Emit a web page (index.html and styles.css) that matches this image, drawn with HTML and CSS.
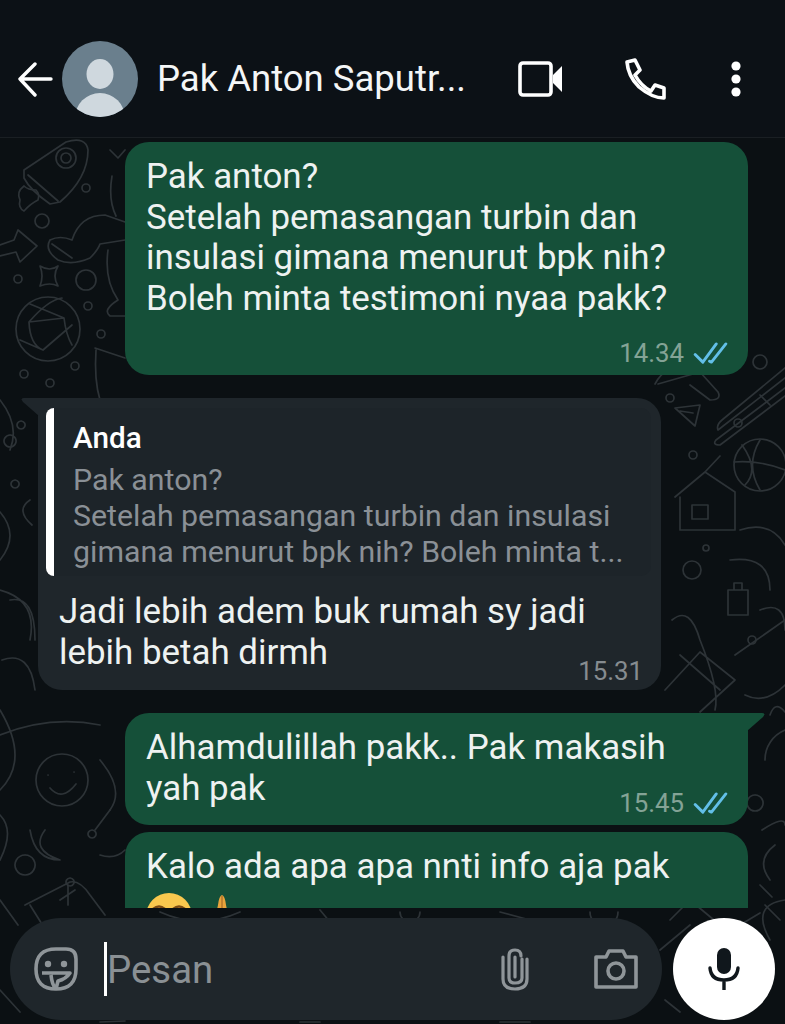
FILE: index.html
```html
<!DOCTYPE html>
<html lang="en">
<head>
    <meta charset="UTF-8">
    <meta name="viewport" content="width=device-width, initial-scale=1.0">
    <title>Pak Anton Saputra</title>
    <link rel="stylesheet" href="styles.css">
</head>
<body>
    <div id="phone">
        <!-- wallpaper doodles -->
        <svg class="wallpaper" viewBox="0 0 785 1024" fill="none" stroke="#2d3337" stroke-width="1.7" stroke-linejoin="round" stroke-linecap="round">
            <path d="M24 170 L66 142 Q86 136 88 150 Q88 178 60 202 L50 204 Q30 190 24 178 Z M28 175 L58 201"/>
            <circle cx="66" cy="158" r="10"/><circle cx="66" cy="158" r="5"/>
            <path d="M24 186 Q16 192 20 200 Q18 208 24 211 Q30 204 38 200 Q40 194 36 190 Q28 190 24 186Z"/>
            <circle cx="86" cy="188" r="4"/><circle cx="42" cy="221" r="7"/>
            <path d="M0 245 L14 240 L18 230 L37 246 L20 262 L16 252 L0 256"/>
            <path d="M50 240 Q60 235 72 240 Q80 215 105 215 L125 222 M50 240 Q44 250 58 260 Q72 266 90 258 Q98 250 100 244 L125 240 M52 244 L72 258"/>
            <path d="M40 266 Q50 272 58 266 Q52 276 58 286 Q50 282 40 286 Q44 276 40 266Z"/>
            <circle cx="18" cy="279" r="4"/><circle cx="86" cy="280" r="10"/><circle cx="88" cy="306" r="4"/><circle cx="101" cy="334" r="4"/>
            <circle cx="48" cy="329" r="32"/>
            <path d="M29 322 Q48 300 62 298 M29 322 Q30 345 43 350 M29 322 L64 318 M43 350 L72 325 M64 318 Q66 335 72 345 M20 340 L43 350 M30 304 L64 318"/>
            <circle cx="75" cy="366" r="4"/><circle cx="24" cy="374" r="4"/><circle cx="50" cy="383" r="4"/>
            <path d="M95 348 L125 358 M96 350 Q94 380 100 400"/>
            <path d="M110 150 L118 158 L125 150 M112 176 Q108 200 116 216 M108 250 Q104 280 118 300 Q102 310 110 316 L125 316"/>
            <path d="M0 400 Q20 425 10 450 M10 435 a6 6 0 1 0 .1 0 M21 421 a4 4 0 1 0 .1 0 M15 480 a4 4 0 1 0 .1 0 M30 500 Q15 510 32 525 M0 512 Q20 535 0 560 M0 590 Q38 600 30 640 M10 600 Q35 595 35 640 M2 660 Q30 650 35 690"/>
            <path d="M658 384 L700 372 L718 392 Q722 400 710 400 L690 385 M655 384 Q668 360 700 364"/>
            <path d="M675 408 L700 405 L695 426 Z M680 411 L693 413"/>
            <circle cx="670" cy="398" r="4"/><circle cx="760" cy="362" r="7"/><circle cx="738" cy="423" r="4"/><circle cx="693" cy="455" r="4"/>
            <path d="M722 420 L785 368 M716 440 L785 388 M722 420 Q716 425 718 430 L785 378 M716 440 Q712 445 720 445 L785 396 M760 395 L770 405"/>
            <circle cx="760" cy="465" r="26"/><path d="M734 462 Q760 460 785 470 M760 440 Q745 465 760 490 M742 445 Q760 470 745 485"/>
            <path d="M675 497 L705 472 L735 492 V530 H680 V497 M692 505 h16 v14 h-16z M705 472 L720 456"/>
            <circle cx="706" cy="548" r="3"/><circle cx="692" cy="570" r="9"/><path d="M728 590 h20 v25 h-20z M734 590 v-7 h8 v7"/><path d="M740 530 Q770 520 785 545 M730 560 Q770 555 770 590 M760 610 Q785 600 785 630"/>
            <path d="M672 620 Q690 605 700 640 Q720 690 715 710 M665 690 L700 652 L735 680 L700 712 M680 655 L720 690"/>
            <circle cx="752" cy="640" r="4"/><path d="M735 655 L785 620 M745 695 Q765 705 785 685"/>
            <path d="M770 715 Q775 700 785 712 M765 760 a32 32 0 0 1 20 -30 M755 795 a8 8 0 1 0 .1 0 M762 830 Q785 815 785 825 M770 880 Q755 860 775 845 M785 900 Q750 905 770 940 M760 885 l12 12"/>
            <path d="M0 710 Q30 760 0 790 M0 735 Q50 715 100 725"/>
            <circle cx="62" cy="780" r="26"/><path d="M48 775 h.1 M74 772 h.1 M50 788 Q62 802 76 784"/>
            <path d="M100 760 Q125 790 110 810 M92 830 a4 4 0 1 0 .1 0 M45 830 Q30 850 60 860 Q35 860 30 830 M25 855 a10 10 0 1 0 .1 0 M0 815 Q15 830 0 860 M70 878 a4 4 0 1 0 .1 0"/>
            <path d="M25 905 L70 882 Q80 880 90 895 L105 915 M30 905 L55 945 M60 900 L75 890 M68 885 L68 905"/>
            <path d="M95 830 L110 810 M100 855 Q115 860 125 850 M0 900 L18 925"/>
            <path d="M660 950 L690 925 M670 920 L690 900 L720 925 M740 925 l20 -12 M765 905 l15 15"/>
            <path d="M160 912 Q200 930 240 912 M320 910 l10 12 M400 912 a10 10 0 0 0 20 0 M500 912 l30 8 M590 912 a14 14 0 0 0 28 0"/>
            <path d="M0 990 L20 1012 M100 1022 L125 1021 M300 1022 l20 0 M500 1022 l30 0 M665 1000 l15 12"/>
        </svg>

        <div class="top-bar">
            <svg class="back-icon" viewBox="0 0 36 36" fill="none" stroke="#fff" stroke-width="3.4" stroke-linecap="round" stroke-linejoin="round">
                <path d="M34 18H3M18 3 3 18l15 16"/>
            </svg>
            <svg class="avatar" viewBox="0 0 76 76">
                <defs><clipPath id="avatar-clip"><circle cx="38" cy="38" r="38"/></clipPath></defs>
                <circle cx="38" cy="38" r="38" fill="#6a7f8d"/>
                <g clip-path="url(#avatar-clip)" fill="#cfd8de">
                    <ellipse cx="38" cy="33" rx="13.5" ry="15"/>
                    <ellipse cx="38" cy="77" rx="25" ry="25"/>
                </g>
            </svg>
            <div class="contact-name">Pak Anton Saputr...</div>
            <div class="top-actions">
                <svg class="top-icon" viewBox="0 0 46 36" fill="none">
                    <rect x="2" y="2" width="31" height="32" rx="3" stroke="#fff" stroke-width="3.6"/>
                    <path d="M35 14 44 5V31L35 22Z" fill="#fff"/>
                </svg>
                <svg class="top-icon" viewBox="0 0 42 42" fill="none" stroke="#fff" stroke-width="3.6" stroke-linejoin="round">
                    <path d="M3 4 11 2 16 12 11 17Q17 28 27 33L31 27 40 30V40Q28 40 15 29 4 18 3 4Z"/>
                </svg>
                <svg class="top-dots" viewBox="0 0 12 36" fill="#fff">
                    <circle cx="6" cy="5" r="4.6"/><circle cx="6" cy="18" r="4.6"/><circle cx="6" cy="31" r="4.6"/>
                </svg>
            </div>
        </div>

        <div class="messages">
            <div class="bubble out">
                <div class="text">Pak anton?<br>Setelah pemasangan turbin dan<br>insulasi gimana menurut bpk nih?<br>Boleh minta testimoni nyaa pakk?</div>
                <div class="meta">
                    <span class="time">14.34</span>
                    <svg class="ticks" viewBox="0 0 36 24" fill="none" stroke="#62bfe8" stroke-width="3" stroke-linecap="round" stroke-linejoin="round">
                        <path d="M2 13 10 21 24 2M17 20 19 21 34 2"/>
                    </svg>
                </div>
            </div>

            <div class="bubble in">
                <svg class="tail tail-left" viewBox="0 0 18 18"><path d="M18 0H3Q-1 0 2 4L18 18Z" fill="#1f262b"/></svg>
                <div class="quote">
                    <div class="quote-bar"></div>
                    <div class="quote-body">
                        <div class="quote-name">Anda</div>
                        <div class="quote-text">Pak anton?<br>Setelah pemasangan turbin dan insulasi<br>gimana menurut bpk nih? Boleh minta t...</div>
                    </div>
                </div>
                <div class="text reply-text">Jadi lebih adem buk rumah sy jadi<br>lebih betah dirmh</div>
                <div class="meta meta-in"><span class="time">15.31</span></div>
            </div>

            <div class="bubble out has-tail">
                <svg class="tail tail-right" viewBox="0 0 18 18"><path d="M0 0H15Q19 0 16 4L0 18Z" fill="#155039"/></svg>
                <div class="text">Alhamdulillah pakk.. Pak makasih<br>yah pak</div>
                <div class="meta meta-tight">
                    <span class="time">15.45</span>
                    <svg class="ticks" viewBox="0 0 36 24" fill="none" stroke="#62bfe8" stroke-width="3" stroke-linecap="round" stroke-linejoin="round">
                        <path d="M2 13 10 21 24 2M17 20 19 21 34 2"/>
                    </svg>
                </div>
            </div>

            <div class="bubble out last">
                <div class="text">Kalo ada apa apa nnti info aja pak</div>
                <div class="emoji-row">
                    <svg class="emoji" viewBox="0 0 46 46">
                        <circle cx="23" cy="23" r="23" fill="#f9c84e"/>
                        <path d="M7 16q6-5 12 0M27 16q6-5 12 0" fill="none" stroke="#7a4a12" stroke-width="2.4"/>
                    </svg>
                    <svg class="emoji-hands" viewBox="0 0 22 46">
                        <path d="M11 2Q14 3 15 12L21 40H1L7 12Q8 3 11 2Z" fill="#e9a33c"/>
                        <path d="M11 3V40" stroke="#b5762a" stroke-width="1.5"/>
                    </svg>
                </div>
            </div>
        </div>

        <div class="composer">
            <div class="input-pill">
                <svg class="sticker-icon" viewBox="0 0 44 44" fill="none" stroke="#8f9599" stroke-width="3.6" stroke-linejoin="round">
                    <path d="M22 2H32Q42 2 42 12V22Q42 42 22 42 2 42 2 22 2 2 22 2Z"/>
                    <circle cx="14" cy="17" r="3.2" fill="#8f9599" stroke="none"/>
                    <circle cx="30" cy="17" r="3.2" fill="#8f9599" stroke="none"/>
                    <path d="M8 26H36Q32 32 24 34 L22 42M17 28Q18 38 22 42"/>
                </svg>
                <span class="caret"></span>
                <span class="placeholder">Pesan</span>
                <svg class="clip-icon" viewBox="0 0 30 44" fill="none" stroke="#8f9599" stroke-width="3.2" stroke-linecap="round">
                    <path d="M22 12V31Q22 36 15 36 9 36 9 31V9Q9 3 15 3 21 3 21 9M15 10V30M27 12V32Q27 42 15 42 3 42 3 32V10"/>
                </svg>
                <svg class="camera-icon" viewBox="0 0 44 40" fill="none" stroke="#8f9599" stroke-width="3.6" stroke-linejoin="round">
                    <path d="M2 8H12L15 2H29L32 8H42V38H2Z"/>
                    <circle cx="22" cy="22" r="8"/>
                </svg>
            </div>
            <div class="mic-button">
                <svg class="mic-icon" viewBox="0 0 32 42">
                    <rect x="9" y="0" width="14" height="26" rx="7" fill="#10171c"/>
                    <path d="M2 20Q3 32 16 32 29 32 30 20M16 32V42" fill="none" stroke="#10171c" stroke-width="3.4" stroke-linecap="round"/>
                </svg>
            </div>
        </div>
    </div>
</body>
</html>
```
FILE: styles.css
```css
body {
    margin: 0;
    font-family: Roboto, "Liberation Sans", sans-serif;
    background-color: #0b1013;
}
#phone {
    position: relative;
    width: 785px;
    height: 1024px;
    overflow: hidden;
    display: flex;
    flex-direction: column;
    background-color: #0b1013;
}
.wallpaper {
    position: absolute;
    left: 0;
    top: 0;
    width: 785px;
    height: 1024px;
}
.top-bar {
    position: relative;
    height: 138px;
    flex-shrink: 0;
    box-sizing: border-box;
    padding: 41px 43px 21px 17px;
    display: flex;
    align-items: center;
    background-color: #0c1116;
    border-bottom: 1px solid #1a1f23;
}
.back-icon {
    width: 36px;
    height: 36px;
    margin-right: 9px;
}
.avatar {
    width: 76px;
    height: 76px;
    margin-right: 19px;
}
.contact-name {
    flex: 1;
    color: #f4f6f7;
    font-size: 36.5px;
    white-space: nowrap;
}
.top-actions {
    display: flex;
    align-items: center;
}
.top-icon {
    width: 46px;
    height: 36px;
    margin-right: 60px;
}
.top-icon + .top-icon {
    width: 42px;
    height: 42px;
    margin-right: 64px;
}
.top-dots {
    width: 12px;
    height: 36px;
}
.messages {
    position: relative;
    height: 770px;
    flex-shrink: 0;
    box-sizing: border-box;
    padding-top: 4px;
    overflow: hidden;
    display: flex;
    flex-direction: column;
}
.bubble {
    position: relative;
    width: 623px;
    box-sizing: border-box;
    flex-shrink: 0;
    border-radius: 24px;
    color: #eef2f1;
    font-size: 34.9px;
    line-height: 40.7px;
}
.out {
    margin-left: 125px;
    background-color: #155039;
    padding: 15px 20px 0 21px;
    height: 233px;
    margin-bottom: 23px;
}
.in {
    margin-left: 38px;
    background-color: #1f262b;
    border-radius: 0 24px 24px 24px;
    padding: 10px 10px 0 8px;
    height: 292px;
    margin-bottom: 23px;
}
.has-tail {
    height: 112px;
    border-top-right-radius: 0;
    margin-bottom: 7px;
}
.last {
    height: 120px;
    margin-bottom: 0;
}
.tail {
    position: absolute;
    top: 0;
    width: 18px;
    height: 18px;
}
.tail-left {
    left: -17px;
}
.tail-right {
    right: -17px;
}
.quote {
    height: 168px;
    display: flex;
    border-radius: 10px;
    background-color: #1d2429;
}
.quote-bar {
    width: 8px;
    flex-shrink: 0;
    border-radius: 10px 0 0 10px;
    background-color: #fff;
}
.quote-body {
    padding: 12px 0 0 19px;
}
.quote-name {
    color: #fff;
    font-size: 29.7px;
    font-weight: 500;
    line-height: 36px;
}
.quote-text {
    margin-top: 6px;
    color: #8a9096;
    font-size: 30.3px;
    line-height: 36px;
    white-space: nowrap;
}
.reply-text {
    margin: 16px 0 0 13px;
}
.meta {
    position: absolute;
    right: 20px;
    bottom: 4px;
    display: flex;
    align-items: center;
    gap: 9px;
}
.meta-in {
    right: 18px;
    bottom: 1px;
}
.meta-tight {
    bottom: 4px;
}
.time {
    color: #84a396;
    font-size: 25.8px;
    line-height: 36px;
}
.meta-in .time {
    color: #868c90;
}
.ticks {
    width: 35px;
    height: 23px;
}
.emoji-row {
    display: flex;
    gap: 19px;
    margin-top: 5px;
}
.emoji {
    width: 46px;
    height: 46px;
}
.emoji-hands {
    width: 22px;
    height: 46px;
}
.composer {
    position: relative;
    box-sizing: border-box;
    padding: 10px 10px 4px 10px;
    display: flex;
    align-items: center;
    justify-content: space-between;
}
.input-pill {
    width: 652px;
    height: 102px;
    box-sizing: border-box;
    padding: 0 24px 0 24px;
    display: flex;
    align-items: center;
    border-radius: 51px;
    background-color: #1f262b;
}
.sticker-icon {
    width: 44px;
    height: 44px;
    margin-right: 26px;
}
.caret {
    width: 3px;
    height: 54px;
    background-color: #fff;
}
.placeholder {
    flex: 1;
    color: #8a9094;
    font-size: 38.4px;
}
.clip-icon {
    width: 30px;
    height: 44px;
    margin-right: 64px;
}
.camera-icon {
    width: 44px;
    height: 40px;
}
.mic-button {
    width: 102px;
    height: 102px;
    border-radius: 50%;
    background-color: #fff;
    display: flex;
    align-items: center;
    justify-content: center;
}
.mic-icon {
    width: 32px;
    height: 42px;
}
```
